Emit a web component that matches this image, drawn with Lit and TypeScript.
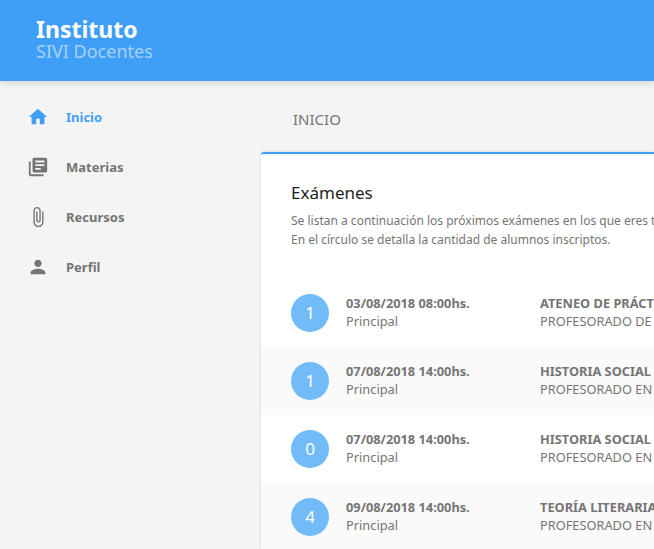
import { LitElement, html, css, svg } from "lit";
import { customElement } from "lit/decorators.js";

const ICONS = {
  home: svg`<path d="M10 20v-6h4v6h5v-8h3L12 3 2 12h3v8z"/>`,
  books: svg`<path d="M4 6H2v14c0 1.1.9 2 2 2h14v-2H4V6zm16-4H8c-1.1 0-2 .9-2 2v12c0 1.1.9 2 2 2h12c1.1 0 2-.9 2-2V4c0-1.1-.9-2-2-2zm-1 9H9V9h10v2zm-4 4H9v-2h6v2zm4-8H9V5h10v2z"/>`,
  clip: svg`<path d="M16.5 6v11.5c0 2.21-1.79 4-4 4s-4-1.79-4-4V5c0-1.38 1.12-2.5 2.5-2.5s2.5 1.12 2.5 2.5v10.5c0 .55-.45 1-1 1s-1-.45-1-1V6H10v9.5c0 1.38 1.12 2.5 2.5 2.5s2.5-1.12 2.5-2.5V5c0-2.21-1.79-4-4-4S7 2.79 7 5v12.5c0 3.04 2.46 5.5 5.5 5.5s5.5-2.46 5.5-5.5V6h-1.5z"/>`,
  person: svg`<path d="M12 12c2.21 0 4-1.79 4-4s-1.79-4-4-4-4 1.79-4 4 1.79 4 4 4zm0 2c-2.67 0-8 1.34-8 4v2h16v-2c0-2.66-5.33-4-8-4z"/>`,
};

const NAV = [
  { icon: ICONS.home, label: "Inicio", active: true },
  { icon: ICONS.books, label: "Materias", active: false },
  { icon: ICONS.clip, label: "Recursos", active: false },
  { icon: ICONS.person, label: "Perfil", active: false },
];

const EXAMS = [
  { n: 1, date: "03/08/2018 08:00hs.", course: "ATENEO DE PRÁCTICA DOCENTE", career: "PROFESORADO DE EDUCACIÓN PRIMARIA" },
  { n: 1, date: "07/08/2018 14:00hs.", course: "HISTORIA SOCIAL ARGENTINA", career: "PROFESORADO EN LENGUA Y LITERATURA" },
  { n: 0, date: "07/08/2018 14:00hs.", course: "HISTORIA SOCIAL ARGENTINA", career: "PROFESORADO EN HISTORIA" },
  { n: 4, date: "09/08/2018 14:00hs.", course: "TEORÍA LITERARIA", career: "PROFESORADO EN LENGUA Y LITERATURA" },
];

@customElement("app-root")
export class AppRoot extends LitElement {
  static styles = css`
    :host {
      display: flex;
      flex-direction: column;
      height: 549px;
      width: 654px;
      overflow: hidden;
      background: #f4f4f4;
      font-family: "Noto Sans", sans-serif;
      color: #757575;
    }
    .top {
      flex: none;
      height: 81px;
      box-sizing: border-box;
      padding: 16px 36px 0;
      background: #3f9ff6;
      box-shadow: 0 2px 8px rgba(0, 0, 0, 0.14);
      position: relative;
      z-index: 2;
    }
    .brand {
      font-size: 23px;
      line-height: 26px;
      font-weight: 700;
      color: #fff;
    }
    .sub {
      font-size: 18px;
      line-height: 18px;
      color: #a6d2fa;
    }
    .body {
      flex: 1;
      display: flex;
      min-height: 0;
    }
    .side {
      flex: none;
      width: 261px;
      box-sizing: border-box;
      padding-top: 11px;
      display: flex;
      flex-direction: column;
    }
    .nav {
      height: 50px;
      display: flex;
      align-items: center;
      gap: 17px;
      padding-left: 27px;
      font-size: 13px;
      font-weight: 700;
    }
    .nav svg {
      width: 22px;
      height: 22px;
      fill: currentColor;
      flex: none;
    }
    .nav.active {
      color: #3f9ff6;
    }
    .main {
      flex: 1;
      min-width: 0;
      display: flex;
      flex-direction: column;
    }
    .crumb {
      flex: none;
      height: 71px;
      box-sizing: border-box;
      padding: 27px 0 0 32px;
      font-size: 15px;
      line-height: 22px;
    }
    .card {
      flex: 1;
      min-height: 0;
      background: #fff;
      border-top: 2px solid #3f9ff6;
      border-top-left-radius: 3px;
      box-shadow: 0 0 3px rgba(0, 0, 0, 0.14);
      white-space: nowrap;
      overflow: hidden;
    }
    .head {
      padding: 26px 0 0 30px;
      height: 125px;
      box-sizing: border-box;
    }
    h2 {
      margin: 0 0 6px;
      font-size: 17px;
      line-height: 25px;
      font-weight: 400;
      color: #1f1f1f;
    }
    .head p {
      margin: 0;
      font-size: 12px;
      line-height: 19px;
    }
    .row {
      height: 68px;
      display: flex;
      align-items: center;
      padding-left: 30px;
      font-size: 12.8px;
      line-height: 18px;
    }
    .row:nth-child(even) {
      background: #fafafa;
    }
    .dot {
      flex: none;
      width: 38px;
      height: 38px;
      border-radius: 50%;
      background: #72bbf9;
      color: #fff;
      display: flex;
      align-items: center;
      justify-content: center;
      font-size: 17px;
      margin-right: 17px;
    }
    .when {
      flex: none;
      width: 194px;
      padding-bottom: 2px;
    }
    .what {
      padding-bottom: 2px;
    }
    b {
      display: block;
      font-weight: 700;
    }
  `;

  render() {
    return html`
      <header class="top">
        <div class="brand">Instituto</div>
        <div class="sub">SIVI Docentes</div>
      </header>
      <div class="body">
        <nav class="side">
          ${NAV.map(
            (n) => html`<div class="nav ${n.active ? "active" : ""}">
              <svg viewBox="0 0 24 24">${n.icon}</svg><span>${n.label}</span>
            </div>`
          )}
        </nav>
        <main class="main">
          <div class="crumb">INICIO</div>
          <section class="card">
            <div class="head">
              <h2>Exámenes</h2>
              <p>Se listan a continuación los próximos exámenes en los que eres titular.</p>
              <p>En el círculo se detalla la cantidad de alumnos inscriptos.</p>
            </div>
            <div class="list">
              ${EXAMS.map(
                (e) => html`<div class="row">
                  <div class="dot">${e.n}</div>
                  <div class="when"><b>${e.date}</b>Principal</div>
                  <div class="what"><b>${e.course}</b>${e.career}</div>
                </div>`
              )}
            </div>
          </section>
        </main>
      </div>
    `;
  }
}
